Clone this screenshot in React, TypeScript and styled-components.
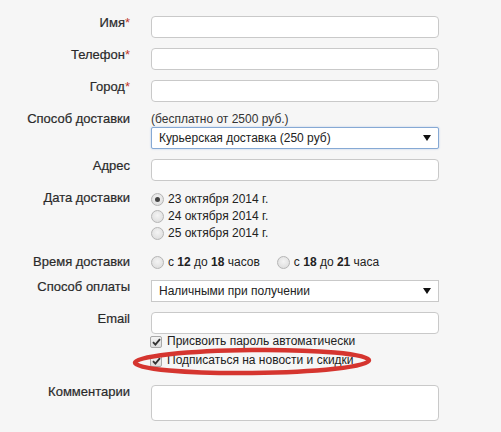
import React from "react";
import styled, { createGlobalStyle } from "styled-components";

const Global = createGlobalStyle`
  html, body { margin: 0; padding: 0; background: #f6f6f6; }
  body { font-family: "Liberation Sans", Arial, sans-serif; font-size: 12px; color: #222; }
`;

const Page = styled.div`
  width: 501px;
  height: 432px;
  box-sizing: border-box;
  padding-top: 16px;
  background: #f6f6f6;
  overflow: hidden;
`;

const Form = styled.div`
  display: grid;
  grid-template-columns: 130px 288px;
  column-gap: 21px;
  row-gap: 10px;
  align-items: start;
`;

const Label = styled.div`
  text-align: right;
  font-size: 13px;
  line-height: 14px;
  color: #2a2a2a;
  -webkit-text-stroke: 0.2px #2a2a2a;
  white-space: nowrap;
`;

const Star = styled.span`
  color: #c0392b;
  -webkit-text-stroke: 0;
`;

const Field = styled.div<{ $pb?: number }>`
  display: flex;
  flex-direction: column;
  padding-bottom: ${(p) => p.$pb ?? 0}px;
`;

const TextInput = styled.div<{ $h?: number }>`
  box-sizing: border-box;
  height: ${(p) => p.$h ?? 22}px;
  border: 1px solid #c9c9c9;
  border-radius: 4px;
  background: #fff;
`;

const Note = styled.div`
  line-height: 15px;
  color: #333;
`;

const Select = styled.div<{ $focus?: boolean }>`
  box-sizing: border-box;
  height: 22px;
  display: flex;
  align-items: center;
  justify-content: space-between;
  padding: 0 7px 0 7px;
  background: #fff;
  border: 1px solid ${(p) => (p.$focus ? "#86a9d4" : "#c9c9c9")};
  border-radius: ${(p) => (p.$focus ? "2px" : "0")};
  box-shadow: ${(p) => (p.$focus ? "0 0 2px rgba(90,140,210,0.45)" : "none")};
  color: #222;
`;

const Arrow = () => (
  <svg width="8" height="6" viewBox="0 0 8 6">
    <path d="M0 0 H8 L4 6 Z" fill="#111" />
  </svg>
);

const OptionLine = styled.label<{ $h?: number }>`
  display: flex;
  align-items: center;
  height: ${(p) => p.$h ?? 17}px;
  line-height: 15px;
  white-space: nowrap;
`;

const Radio = styled.span<{ $on?: boolean }>`
  box-sizing: border-box;
  width: 13px;
  height: 13px;
  border-radius: 50%;
  border: 1px solid #b5b5b5;
  background: radial-gradient(circle at 50% 40%, #f4f4f4, #d9d9d9);
  margin-right: 4px;
  flex: none;
  display: flex;
  align-items: center;
  justify-content: center;
  &::after {
    content: "";
    width: 5px;
    height: 5px;
    border-radius: 50%;
    background: ${(p) => (p.$on ? "#444" : "transparent")};
  }
`;

const TimeRow = styled.div`
  display: flex;
  align-items: center;
  gap: 17px;
  height: 15px;
`;

const Checks = styled.div`
  display: flex;
  flex-direction: column;
  gap: 4px;
`;

const CheckLine = styled.label`
  position: relative;
  display: flex;
  align-items: center;
  height: 15px;
  line-height: 15px;
  white-space: nowrap;
`;

const Box = styled.span`
  box-sizing: border-box;
  width: 12px;
  height: 12px;
  margin-left: -1px;
  margin-right: 5px;
  border: 1px solid #a9a9a9;
  border-radius: 2px;
  background: linear-gradient(#f4f4f4, #dcdcdc);
  display: flex;
  align-items: center;
  justify-content: center;
  flex: none;
`;

const Tick = () => (
  <svg width="9" height="8" viewBox="0 0 9 8">
    <path d="M1 4.2 L3.4 6.6 L8 1.2" fill="none" stroke="#333" strokeWidth="1.9" />
  </svg>
);

const Ring = styled.svg`
  position: absolute;
  left: -18px;
  top: -5px;
  width: 238px;
  height: 27px;
  overflow: visible;
  pointer-events: none;
`;

export default function App() {
  return (
    <Page>
      <Global />
      <Form>
        <Label>
          Имя<Star>*</Star>
        </Label>
        <Field>
          <TextInput />
        </Field>

        <Label>
          Телефон<Star>*</Star>
        </Label>
        <Field>
          <TextInput />
        </Field>

        <Label>
          Город<Star>*</Star>
        </Label>
        <Field>
          <TextInput />
        </Field>

        <Label>Способ доставки</Label>
        <Field>
          <Note>(бесплатно от 2500 руб.)</Note>
          <Select $focus>
            <span>Курьерская доставка (250 руб)</span>
            <Arrow />
          </Select>
        </Field>

        <Label>Адрес</Label>
        <Field>
          <TextInput />
        </Field>

        <Label>Дата доставки</Label>
        <Field $pb={3}>
          <OptionLine>
            <Radio $on />
            23 октября 2014 г.
          </OptionLine>
          <OptionLine>
            <Radio />
            24 октября 2014 г.
          </OptionLine>
          <OptionLine>
            <Radio />
            25 октября 2014 г.
          </OptionLine>
        </Field>

        <Label>Время доставки</Label>
        <Field>
          <TimeRow>
            <OptionLine $h={15}>
              <Radio />с&nbsp;<b>12</b>&nbsp;до&nbsp;<b>18</b>&nbsp;часов
            </OptionLine>
            <OptionLine $h={15}>
              <Radio />с&nbsp;<b>18</b>&nbsp;до&nbsp;<b>21</b>&nbsp;часа
            </OptionLine>
          </TimeRow>
        </Field>

        <Label>Способ оплаты</Label>
        <Field>
          <Select>
            <span>Наличными при получении</span>
            <Arrow />
          </Select>
        </Field>

        <Label>Email</Label>
        <Field $pb={7}>
          <TextInput />
          <Checks>
            <CheckLine>
              <Box>
                <Tick />
              </Box>
              Присвоить пароль автоматически
            </CheckLine>
            <CheckLine>
              <Box>
                <Tick />
              </Box>
              Подписаться на новости и скидки
              <Ring viewBox="0 0 238 27">
                <ellipse
                  cx="119"
                  cy="13.5"
                  rx="117"
                  ry="11.5"
                  fill="none"
                  stroke="#d5352f"
                  strokeWidth="4.5"
                  transform="rotate(-0.6 119 13.5)"
                />
              </Ring>
            </CheckLine>
          </Checks>
        </Field>

        <Label>Комментарии</Label>
        <Field>
          <TextInput $h={36} />
        </Field>
      </Form>
    </Page>
  );
}
